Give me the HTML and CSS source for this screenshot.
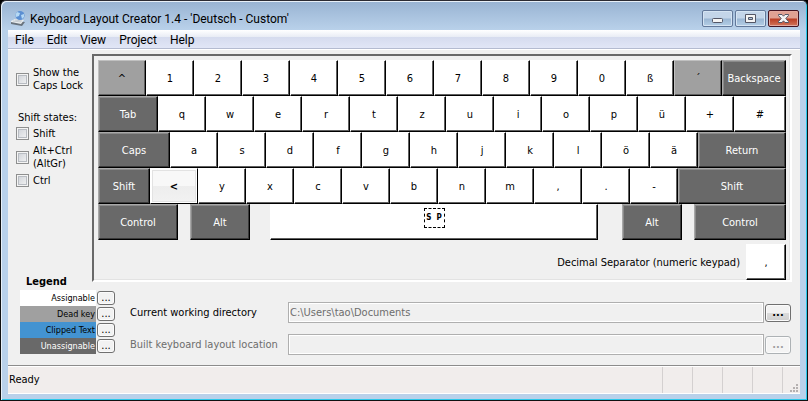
FILE: index.html
```
<!DOCTYPE html>
<html lang="en">
  <head>
    <meta charset="UTF-8" />
    <meta name="viewport" content="width=device-width, initial-scale=1.0" />
    <title>Keyboard Layout Creator 1.4</title>
    <link rel="stylesheet" href="styles.css">
  </head>
  <body>
    <div class="window">
      <header class="titlebar">
        <svg class="app-icon" width="16" height="16" viewBox="0 0 16 16">
          <path d="M1 11l4-1 10 1-3 4-11-2z" fill="#69737d" />
          <path d="M1 10l4-2 9 1-3 4-10-2z" fill="#e9edef" />
          <path d="M3 10l8 1M5 9l7 1" stroke="#a9b2ba" stroke-width="0.6" />
          <circle cx="10" cy="4.500" r="4.500" fill="#5b8fd2" />
          <path d="M7 1l3 1-1 3-3 1c-1-2 0-4 1-5zM11 4l3-1v3l-2 2z" fill="#b5d9f5" />
        </svg>
        <h1>Keyboard Layout Creator 1.4 - 'Deutsch - Custom'</h1>
        <div class="controls">
          <button class="control" aria-label="Minimize">
            <svg width="29" height="15" viewBox="0 0 29 15">
              <rect x="9.500" y="7.500" width="10" height="4" rx="1" fill="#f4f4f4" stroke="#535666" />
            </svg>
          </button>
          <button class="control" aria-label="Maximize">
            <svg width="29" height="15" viewBox="0 0 29 15">
              <path d="M9.500 3.500h10v8h-10zM12.500 6.500h4v2h-4z" fill="#f4f4f4" fill-rule="evenodd" stroke="#535666" />
            </svg>
          </button>
          <button class="control close" aria-label="Close">
            <svg width="29" height="15" viewBox="0 0 29 15">
              <path d="M9.500 3.500h3.500l1.500 1.700 1.500-1.700h3.500v1l-2.700 3 2.700 3v1H16l-1.500-1.700-1.500 1.700H9.500v-1l2.700-3-2.700-3z" fill="#f4f4f4" stroke="#535666" />
            </svg>
          </button>
        </div>
      </header>

      <div class="client">
        <nav class="menubar">
          <a href="#">File</a>
          <a href="#">Edit</a>
          <a href="#">View</a>
          <a href="#">Project</a>
          <a href="#">Help</a>
        </nav>

        <main class="workspace">
          <div class="upper">
            <aside class="states">
              <label class="check"><input type="checkbox" /><span>Show the<br />Caps Lock</span></label>
              <fieldset>
                <legend>Shift states:</legend>
                <label class="check"><input type="checkbox" /><span>Shift</span></label>
                <label class="check"><input type="checkbox" /><span>Alt+Ctrl<br />(AltGr)</span></label>
                <label class="check"><input type="checkbox" /><span>Ctrl</span></label>
              </fieldset>
            </aside>

            <section class="keyboard">
              <div class="row">
                <button class="key dead">^</button>
                <button class="key">1</button>
                <button class="key">2</button>
                <button class="key">3</button>
                <button class="key">4</button>
                <button class="key">5</button>
                <button class="key">6</button>
                <button class="key">7</button>
                <button class="key">8</button>
                <button class="key">9</button>
                <button class="key">0</button>
                <button class="key">ß</button>
                <button class="key dead">´</button>
                <button class="key fixed w64">Backspace</button>
              </div>
              <div class="row">
                <button class="key fixed w60">Tab</button>
                <button class="key">q</button>
                <button class="key">w</button>
                <button class="key">e</button>
                <button class="key">r</button>
                <button class="key">t</button>
                <button class="key">z</button>
                <button class="key">u</button>
                <button class="key">i</button>
                <button class="key">o</button>
                <button class="key">p</button>
                <button class="key">ü</button>
                <button class="key">+</button>
                <button class="key w52">#</button>
              </div>
              <div class="row">
                <button class="key fixed w72">Caps</button>
                <button class="key">a</button>
                <button class="key">s</button>
                <button class="key">d</button>
                <button class="key">f</button>
                <button class="key">g</button>
                <button class="key">h</button>
                <button class="key">j</button>
                <button class="key">k</button>
                <button class="key">l</button>
                <button class="key">ö</button>
                <button class="key">ä</button>
                <button class="key fixed w88">Return</button>
              </div>
              <div class="row">
                <button class="key fixed w52">Shift</button>
                <button class="key hot">&lt;</button>
                <button class="key">y</button>
                <button class="key">x</button>
                <button class="key">c</button>
                <button class="key">v</button>
                <button class="key">b</button>
                <button class="key">n</button>
                <button class="key">m</button>
                <button class="key">,</button>
                <button class="key">.</button>
                <button class="key">-</button>
                <button class="key fixed w108">Shift</button>
              </div>
              <div class="row bottom">
                <button class="key fixed w80">Control</button>
                <button class="key fixed w60">Alt</button>
                <button class="key space"><span>S&nbsp; P</span></button>
                <button class="key fixed w60">Alt</button>
                <button class="key fixed w92">Control</button>
              </div>
              <div class="decimal">
                <span id="decimal-label">Decimal Separator (numeric keypad)</span>
                <button class="key" aria-describedby="decimal-label">,</button>
              </div>
            </section>
          </div>

          <div class="lower">
            <div class="legend">
              <h2>Legend</h2>
              <ul>
                <li><span class="swatch assignable">Assignable</span><button class="more" aria-label="Assignable color">...</button></li>
                <li><span class="swatch deadkey">Dead key</span><button class="more" aria-label="Dead key color">...</button></li>
                <li><span class="swatch clipped">Clipped Text</span><button class="more" aria-label="Clipped Text color">...</button></li>
                <li><span class="swatch unassignable">Unassignable</span><button class="more" aria-label="Unassignable color">...</button></li>
              </ul>
            </div>
            <form class="paths">
              <label for="workdir">Current working directory</label>
              <input id="workdir" type="text" value="C:\Users\tao\Documents" readonly />
              <button class="browse" type="button" aria-label="Browse working directory">...</button>
              <label class="off" for="built">Built keyboard layout location</label>
              <input id="built" type="text" readonly />
              <button class="browse" type="button" aria-label="Browse layout location" disabled>...</button>
            </form>
          </div>
        </main>

        <footer class="statusbar">
          <span class="message">Ready</span>
          <span class="pane"></span>
          <span class="pane"></span>
          <span class="pane"></span>
          <span class="pane"></span>
          <span class="pane grip">
            <svg width="8" height="8" viewBox="0 0 8 8" fill="#b5b0b0">
              <path d="M6 0h2v2H6zM3 3h2v2H3zM6 3h2v2H6zM0 6h2v2H0zM3 6h2v2H3zM6 6h2v2H6z" />
            </svg>
          </span>
        </footer>
      </div>
    </div>
  </body>
</html>
```
FILE: styles.css
```
* {
  box-sizing: border-box;
}

body {
  margin: 0;
  background-color: #000;
  color: #000;
  font: 11px/13px "DejaVu Sans Condensed", "DejaVu Sans", sans-serif;
}

button,
input {
  font: inherit;
  color: inherit;
  margin: 0;
  padding: 0;
}

h1,
h2,
ul,
fieldset,
legend {
  margin: 0;
  padding: 0;
  border: 0;
}

/* window frame */
.window {
  min-height: 100vh;
  display: flex;
  flex-direction: column;
  padding: 0 6px 6px;
  border: 1px solid #111;
  border-top-color: #2b2b33;
  border-radius: 6px 6px 0 0;
  background: linear-gradient(#98b3d2, #b9d1ea 29px) #b9d1ea;
  box-shadow: inset 1px 1px #e8f0f8, inset -1px -1px #2cc8ea;
}

.titlebar {
  display: flex;
  align-items: center;
  gap: 4px;
  height: 29px;
  padding: 6px 2px 0 3px;
}

.titlebar h1 {
  flex: 1;
  font: 12px/16px Roboto, sans-serif;
  white-space: nowrap;
}

.controls {
  display: flex;
  gap: 2px;
}

.control {
  width: 31px;
  height: 17px;
  border: 1px solid #62789a;
  border-radius: 2px;
  background: linear-gradient(#c3d5e9 48%, #9ab6d3 52%, #b4cee6);
  box-shadow: inset 0 0 0 1px #d5e4f3;
}

.control svg {
  display: block;
}

.close {
  border-color: #431422;
  background: linear-gradient(#e0a193 48%, #b93c23 52%, #d2775c);
  box-shadow: inset 0 0 0 1px #e3a99f;
}

.client {
  flex: 1;
  display: flex;
  flex-direction: column;
  margin: 0 1px;
  background-color: #f0f0f0;
}

.menubar {
  display: flex;
  gap: 13px;
  height: 20px;
  padding-left: 7px;
  border-bottom: 1px solid #fff;
  background: linear-gradient(#fff, #e8ecf5 7px, #d5dbee 7px, #e1e6f6 18px, #b4bbd0 18px);
  font: 12px/20px Roboto, sans-serif;
}

.menubar a {
  color: inherit;
  text-decoration: none;
}

/* workspace */
.workspace {
  flex: 1;
  padding: 4px 8px 8px 0;
}

.upper {
  display: flex;
}

.states {
  flex: none;
  width: 84px;
  padding: 12px 0 0 8px;
}

.states fieldset {
  margin-top: 19px;
}

.states legend {
  padding: 0 0 3px 2px;
}

.check {
  display: flex;
  align-items: center;
  gap: 4px;
  margin-bottom: 4px;
  white-space: nowrap;
}

.check input {
  appearance: none;
  width: 13px;
  height: 13px;
  border: 1px solid #8e8f8f;
  background: linear-gradient(135deg, #cbcfd5, #f6f6f6) #fff;
  box-shadow: inset 0 0 0 1px #f4f4f4, inset 0 0 0 2px #b8bcc2;
}

.keyboard {
  flex: 1;
  padding: 4px;
  padding-bottom: 0;
  border: 2px solid;
  border-color: #696969 #fff #fff #696969;
  box-shadow: inset -1px -1px #e3e3e3;
}

.row {
  display: flex;
}

.key {
  flex: 48 0 48px;
  height: 36px;
  overflow: hidden;
  border: 1px solid #fff;
  border-right-color: #000;
  border-bottom-color: #000;
  background-color: #fff;
  box-shadow: inset -1px -1px #606060;
  text-align: center;
}

.dead {
  border-top-color: #c0c0c0;
  border-left-color: #c0c0c0;
  background-color: #a0a0a0;
}

.fixed {
  border-top-color: #a8a8a8;
  border-left-color: #a8a8a8;
  background-color: #696969;
  box-shadow: inset -1px -1px #3a3a3a, inset 1px 1px #8a8a8a;
  color: #fff;
}

.hot {
  background: linear-gradient(#f8f8f8 50%, #ededed 50%, #f2f2f2);
  box-shadow: inset 0 0 0 1px #fff, inset 0 0 0 2px #e2e2e2;
  font-weight: bold;
}

.w52 { flex: 52 0 52px; }
.w60 { flex: 60 0 60px; }
.w64 { flex: 64 0 64px; }
.w72 { flex: 72 0 72px; }
.w80 { flex: 80 0 80px; }
.w88 { flex: 88 0 88px; }
.w92 { flex: 92 0 92px; }
.w108 { flex: 108 0 108px; }

.bottom {
  gap: 12px;
}

.space {
  flex: 328 0 328px;
  margin: 0 12px 0 8px;
  padding-bottom: 9px;
}

.space span {
  display: inline-block;
  width: 21px;
  height: 20px;
  border: 1px dashed #000;
  font-size: 8px;
  font-weight: bold;
  line-height: 18px;
}

.decimal {
  display: flex;
  align-items: center;
  justify-content: flex-end;
  gap: 6px;
  padding-top: 4px;
}

.decimal .key {
  flex: 0 0 40px;
}

/* legend and paths */
.lower {
  display: flex;
  gap: 15px;
  padding: 0 1px 0 12px;
}

.legend {
  margin-top: -8px;
}

.legend h2 {
  padding-left: 6px;
  font-size: 11px;
  line-height: 16px;
}

.legend ul {
  list-style: none;
}

.legend li {
  display: flex;
  align-items: center;
  gap: 1px;
  height: 16px;
}

.swatch {
  width: 76px;
  padding-right: 1px;
  font-size: 9px;
  line-height: 16px;
  text-align: right;
}

.assignable {
  background-color: #fff;
}

.deadkey {
  background-color: #a0a0a0;
}

.clipped {
  background-color: #4393d1;
}

.unassignable {
  background-color: #696969;
  color: #fff;
}

.more,
.browse {
  border: 1px solid #707070;
  border-radius: 3px;
  background: linear-gradient(#f2f2f2 50%, #dcdcdc 50%, #cfcfcf);
  box-shadow: inset 0 0 0 1px #fbfbfb;
}

.more {
  width: 18px;
  height: 14px;
  background: #f2f2f2;
  line-height: 10px;
}

.paths {
  flex: 1;
  display: grid;
  grid-template-columns: 157px 1fr 26px;
  grid-auto-rows: 21px;
  row-gap: 11px;
  column-gap: 1px;
  align-items: center;
  padding-top: 20px;
}

.paths input {
  width: 100%;
  height: 21px;
  padding: 0 1px;
  border: 1px solid #afafaf;
  background-color: #f0f0f0;
  box-shadow: inset 0 0 0 1px #fff;
  color: #6d6d6d;
}

.off {
  color: #6d6d6d;
}

.browse {
  height: 18px;
  line-height: 14px;
  font-weight: bold;
}

.browse:disabled {
  border-color: #adb2b5;
  background: #f4f4f4;
  color: #a0a0a0;
}

/* status bar */
.statusbar {
  display: flex;
  height: 29px;
  padding-top: 1px;
  border-top: 1px solid #8c8c8c;
  border-bottom: 1px solid #fff;
  background-color: #f1edec;
  box-shadow: inset 0 1px #fff;
  line-height: 26px;
}

.message {
  flex: 1;
  padding-left: 1px;
}

.pane {
  width: 30px;
  border-left: 1px solid #d4d0d0;
}

.grip {
  display: flex;
  align-items: flex-end;
  justify-content: flex-end;
  width: 18px;
  padding: 0 2px 1px 0;
}
```
